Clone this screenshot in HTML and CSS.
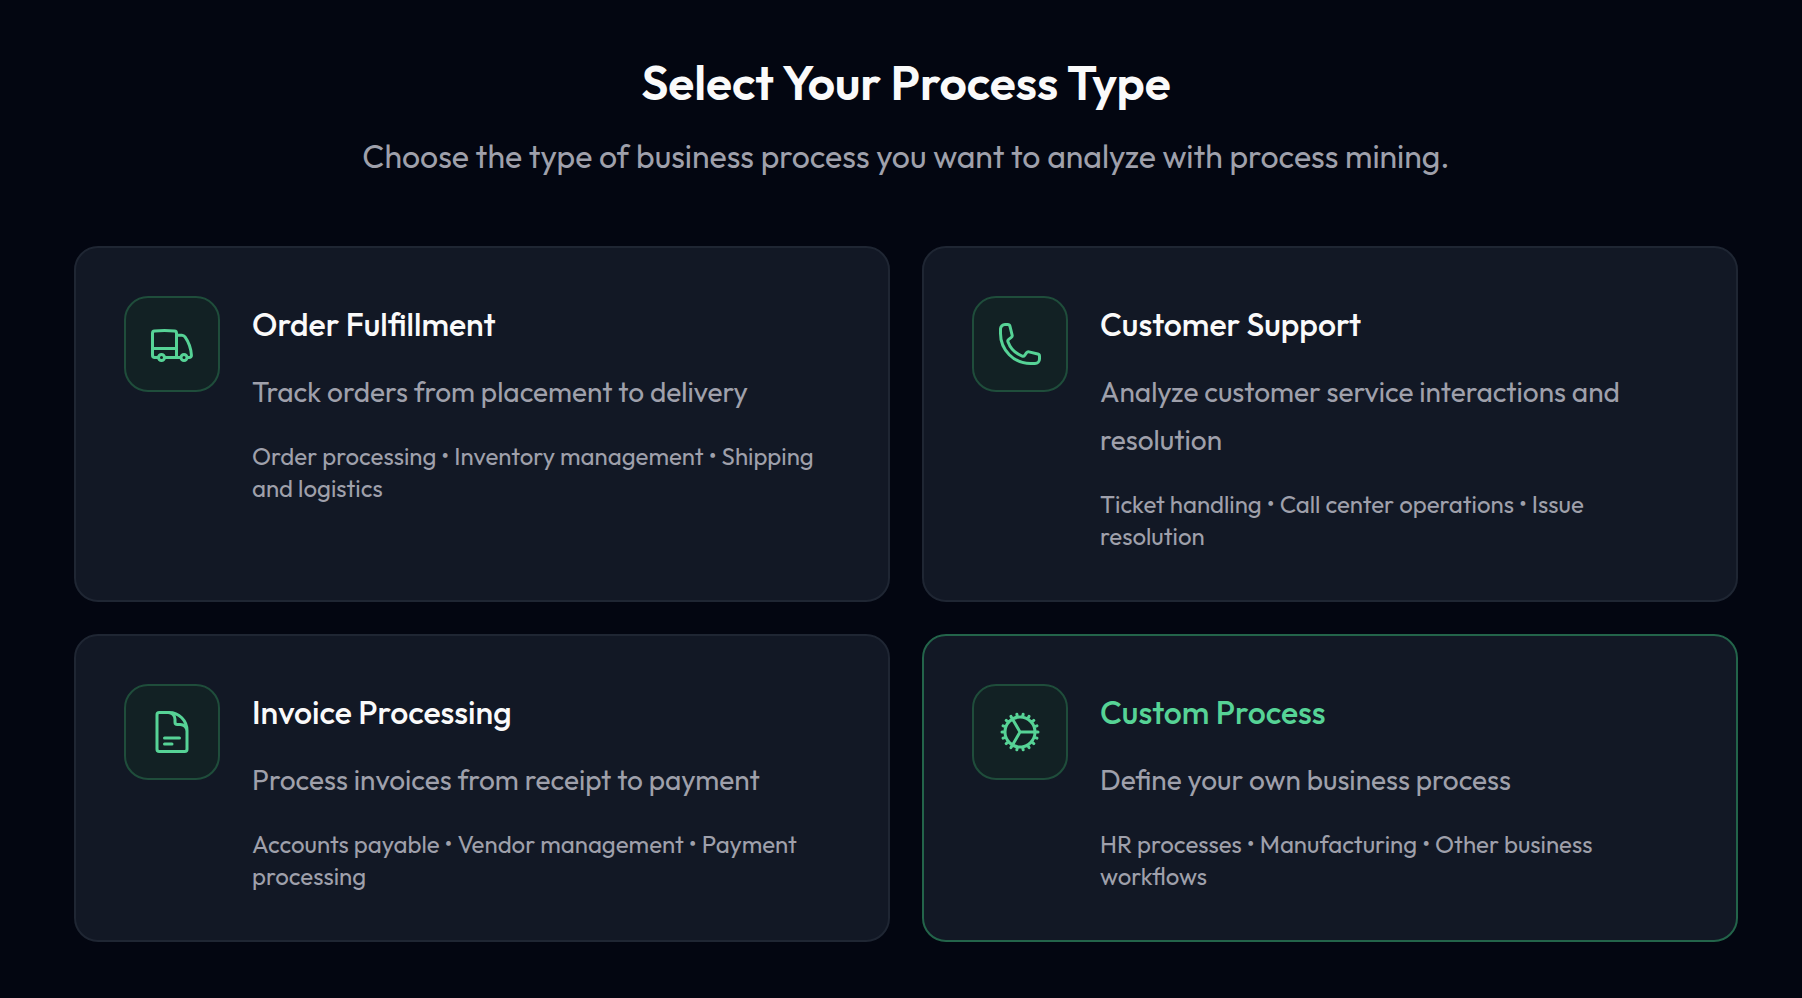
FILE: index.html
```html
<!DOCTYPE html>
<html lang="en">
<head>
<meta charset="utf-8">
<meta name="viewport" content="width=device-width, initial-scale=1">
<title>Select Your Process Type</title>
<link rel="stylesheet" href="styles.css">
</head>
<body>
<main class="page">
  <header class="intro">
    <h1 class="intro-title">Select Your Process Type</h1>
    <p class="intro-text">Choose the type of business process you want to analyze with process mining.</p>
  </header>
  <div class="cards">
    <button type="button" class="card">
      <span class="card-icon">
        <svg class="icon" viewBox="0 0 24 24" aria-hidden="true"><path d="M8.25 18.75a1.5 1.5 0 0 1-3 0m3 0a1.5 1.5 0 0 0-3 0m3 0h6m-9 0H3.375a1.125 1.125 0 0 1-1.125-1.125V14.25m17.25 4.5a1.5 1.5 0 0 1-3 0m3 0a1.5 1.5 0 0 0-3 0m3 0h1.125c.621 0 1.129-.504 1.09-1.124a17.902 17.902 0 0 0-3.213-9.193 2.056 2.056 0 0 0-1.58-.86H14.25M16.5 18.75h-2.25m0-11.177v-.958c0-.568-.422-1.048-.987-1.106a48.554 48.554 0 0 0-10.026 0 1.106 1.106 0 0 0-.987 1.106v7.635m12-6.677v6.677m0 4.5v-4.5m0 0h-12"/></svg>
      </span>
      <span class="card-body">
        <span class="card-title">Order Fulfillment</span>
        <span class="card-text">Track orders from placement to delivery</span>
        <span class="card-examples">Order processing • Inventory management • Shipping and logistics</span>
      </span>
    </button>
    <button type="button" class="card">
      <span class="card-icon">
        <svg class="icon" viewBox="0 0 24 24" aria-hidden="true"><path d="M2.25 6.75c0 8.284 6.716 15 15 15h2.25a2.25 2.25 0 0 0 2.25-2.25v-1.372c0-.516-.351-.966-.852-1.091l-4.423-1.106c-.44-.11-.902.055-1.173.417l-.97 1.293c-.282.376-.769.542-1.21.38a12.035 12.035 0 0 1-7.143-7.143c-.162-.441.004-.928.38-1.21l1.293-.97c.363-.271.527-.734.417-1.173L6.963 3.102a1.125 1.125 0 0 0-1.091-.852H4.5A2.25 2.25 0 0 0 2.25 4.5v2.25Z"/></svg>
      </span>
      <span class="card-body">
        <span class="card-title">Customer Support</span>
        <span class="card-text">Analyze customer service interactions and resolution</span>
        <span class="card-examples">Ticket handling • Call center operations • Issue resolution</span>
      </span>
    </button>
    <button type="button" class="card">
      <span class="card-icon">
        <svg class="icon" viewBox="0 0 24 24" aria-hidden="true"><path d="M19.5 14.25v-2.625a3.375 3.375 0 0 0-3.375-3.375h-1.5A1.125 1.125 0 0 1 13.5 7.125v-1.5a3.375 3.375 0 0 0-3.375-3.375H8.25m0 12.75h7.5m-7.5 3H12M10.5 2.25H5.625c-.621 0-1.125.504-1.125 1.125v17.25c0 .621.504 1.125 1.125 1.125h12.75c.621 0 1.125-.504 1.125-1.125V11.25a9 9 0 0 0-9-9Z"/></svg>
      </span>
      <span class="card-body">
        <span class="card-title">Invoice Processing</span>
        <span class="card-text">Process invoices from receipt to payment</span>
        <span class="card-examples">Accounts payable • Vendor management • Payment processing</span>
      </span>
    </button>
    <button type="button" class="card card-active">
      <span class="card-icon">
        <svg class="icon" viewBox="0 0 24 24" aria-hidden="true"><path d="M4.5 12a7.5 7.5 0 0 0 15 0m-15 0a7.5 7.5 0 1 1 15 0m-15 0H3m16.5 0H21m-1.5 0H12m-8.457 3.077 1.41-.513m14.095-5.13 1.41-.513M5.106 17.785l1.15-.964m11.49-9.642 1.149-.964M7.501 19.795l.75-1.3m7.5-12.99.75-1.3m-6.063 16.658.26-1.477m2.605-14.772.26-1.477m0 17.726-.26-1.477M10.698 4.614l-.26-1.477M16.5 19.794l-.75-1.299M7.5 4.205 12 12m6.894 5.785-1.149-.964M6.256 7.178l-1.15-.964m15.352 8.864-1.41-.513M4.954 9.435l-1.41-.514M12.002 12l-3.75 6.495"/></svg>
      </span>
      <span class="card-body">
        <span class="card-title">Custom Process</span>
        <span class="card-text">Define your own business process</span>
        <span class="card-examples">HR processes • Manufacturing • Other business workflows</span>
      </span>
    </button>
  </div>
</main>
</body>
</html>
```
FILE: styles.css
```css
* {
  box-sizing: border-box;
}

body {
  margin: 0;
  background: #030611;
  color: #fafafa;
  font-family: Outfit, Lato, sans-serif;
}

.page {
  padding: 54px 64px 56px 74px;
}

.intro {
  display: flex;
  flex-direction: column;
  gap: 20px;
  margin-bottom: 64px;
  text-align: center;
}

.intro-title {
  margin: 0;
  font-size: 48px;
  font-weight: 600;
  line-height: 56px;
}

.intro-text {
  margin: 0;
  color: #9fa0ab;
  font-size: 32px;
  line-height: 52px;
}

.cards {
  display: grid;
  grid-template-columns: 1fr 1fr;
  gap: 32px;
}

.card {
  display: flex;
  align-items: flex-start;
  gap: 32px;
  padding: 48px;
  border: 2px solid #1f2633;
  border-radius: 24px;
  background: #121825;
  color: #9fa0ab;
  font-family: inherit;
  text-align: left;
  cursor: pointer;
}

.card-active {
  border-color: #23644a;
}

.card-icon {
  display: flex;
  flex: none;
  align-items: center;
  justify-content: center;
  width: 96px;
  height: 96px;
  border: 2px solid #1f4d3b;
  border-radius: 24px;
  background: #122124;
}

.icon {
  width: 48px;
  height: 48px;
  fill: none;
  stroke: #56d396;
  stroke-width: 1.5;
  stroke-linecap: round;
  stroke-linejoin: round;
}

.card-body {
  display: flex;
  flex: 1;
  flex-direction: column;
  min-width: 0;
}

.card-title {
  margin-bottom: 16px;
  color: #fafafa;
  font-size: 32px;
  font-weight: 500;
  line-height: 56px;
}

.card-active .card-title {
  color: #56d396;
}

.card-text {
  margin-bottom: 24px;
  font-size: 28px;
  line-height: 48px;
}

.card-examples {
  font-size: 24px;
  line-height: 32px;
}
```
